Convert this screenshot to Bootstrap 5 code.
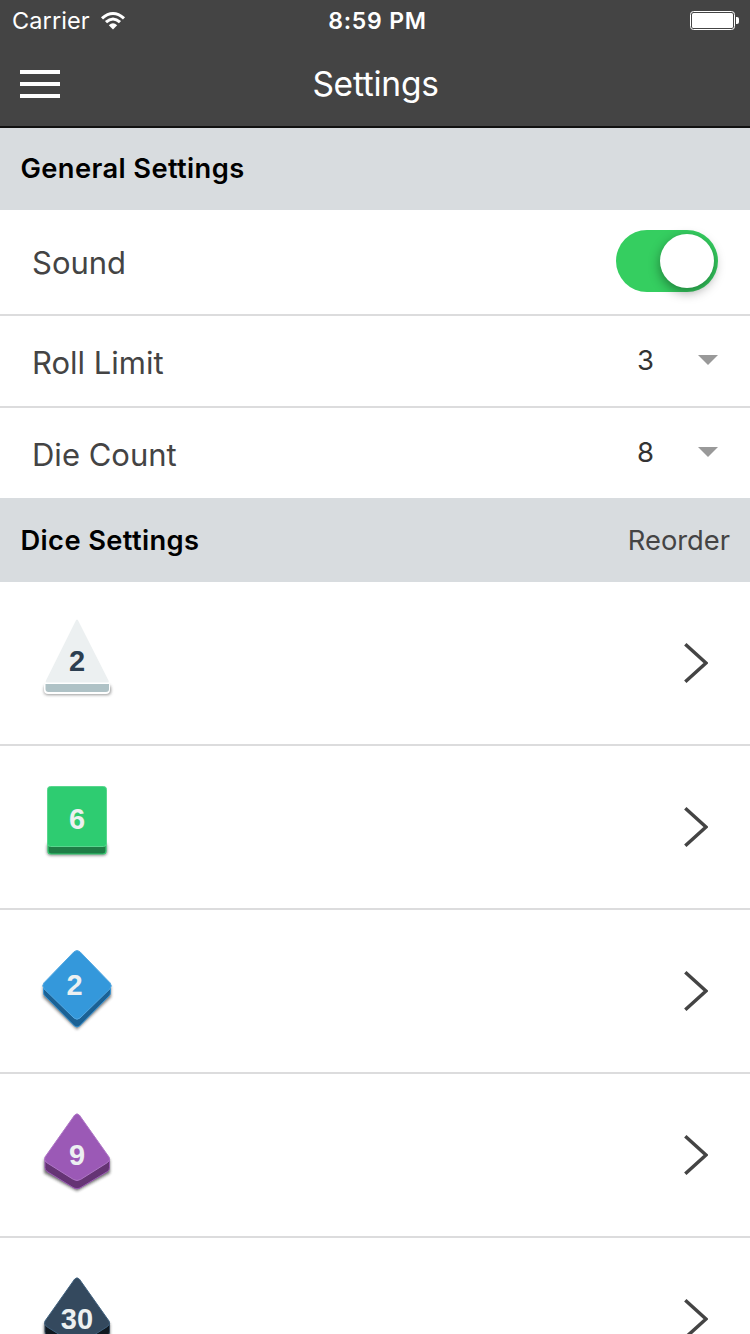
<!DOCTYPE html>
<html lang="en">
<head>
<meta charset="utf-8">
<meta name="viewport" content="width=device-width, initial-scale=1">
<title>Settings</title>
<link href="https://cdn.jsdelivr.net/npm/bootstrap@5.3.0/dist/css/bootstrap.min.css" rel="stylesheet">
<style>
body{font-family:Inter,"Liberation Sans",sans-serif;color:#444;background:#fff}
svg{display:block;flex:none}
.screen{height:1334px;overflow:hidden}
.app-head{background:#444;color:#fff;height:128px;border-bottom:2px solid #111}
.status-row{height:41px;font-size:23.5px;line-height:40px;padding:1px 11px 0 12px}
.status-row>div,.title-row>div{flex:1 1 0}
.carrier{letter-spacing:.1px}
.clock{font-weight:600;letter-spacing:.8px;font-size:23px;padding-left:4px}
.title-row{height:86px;padding:0 20px}
.title-row h1{font-size:33.5px;font-weight:400;line-height:86px;letter-spacing:-.25px;padding-left:1px}
.section-bar{background:#d8dcdf;height:82px;padding:0 20px}
.section-bar.tall{height:84px}
.section-bar h2{font-size:27.3px;font-weight:600;color:#000;line-height:80px;letter-spacing:.38px;padding-left:.5px}
.section-bar.tall h2{padding-top:1px}
.reorder{font-size:27.3px;color:#444;line-height:82px;padding:2px 0 0;border:0}
.settings-list .list-group-item,.settings-list .list-group-item:last-child{border:0;border-bottom:2px solid #dcdcdd;padding:0 32px;height:92px;color:#444;font-size:31px}
.settings-list .sound-row{height:106px}
.settings-list .list-group-item.last-row{height:90px;border-bottom:0}
.row-label{line-height:40px;padding-top:4px}
.sound-row .row-label{padding-top:2px}
.toggle{width:102px;height:62px;border-radius:31px;background:#35ce60;padding:4px 4px 4px 44px;margin-top:-2px}
.knob{width:54px;height:54px;border-radius:50%;background:#fff;box-shadow:0 4px 12px rgba(0,0,0,.4)}
.choice{font-size:27.5px;color:#333}
.caret{margin-left:44px;margin-top:-3px}
.settings-list .list-group-item.die-row{height:164px;padding:0 42px 0 32px}
.die-row text{font:bold 29px "Liberation Sans",Arial,sans-serif;text-anchor:middle;fill:#ecf0f1}
</style>
</head>
<body>
<div class="screen">
<header class="app-head">
  <div class="status-row d-flex align-items-center">
    <div class="d-flex align-items-center carrier">Carrier
      <svg style="margin-left:10px" width="26" height="20" viewBox="0 0 26 20" fill="none" stroke="#fff" stroke-width="3.1"><path d="M2 7.400Q13 -2.400 24 7.400"/><path d="M6 11.200Q13 4.800 20 11.200"/><path d="M8.800 14.300Q13 10.400 17.200 14.300L13 18.500Z" fill="#fff" stroke="none"/></svg>
    </div>
    <span class="clock">8:59 PM</span>
    <div class="d-flex justify-content-end"><svg width="49" height="20" viewBox="0 0 49 20"><rect x=".5" y=".5" width="44" height="18" rx="3" fill="none" stroke="#fff"/><rect x="2" y="2" width="41" height="15" rx="1.500" fill="#fff"/><path d="M46 6h1a2 2 0 0 1 2 2v3a2 2 0 0 1-2 2h-1z" fill="#fff"/></svg></div>
  </div>
  <div class="title-row d-flex align-items-center">
    <div><svg width="40" height="30" role="button" aria-label="Menu"><path d="M0 3h40M0 15h40M0 27h40" stroke="#fff" stroke-width="4"/></svg></div>
    <h1 class="m-0">Settings</h1>
    <div></div>
  </div>
</header>
<main>
  <div class="section-bar d-flex align-items-center"><h2 class="m-0">General Settings</h2></div>
  <div class="list-group list-group-flush settings-list">
    <div class="list-group-item sound-row d-flex align-items-center justify-content-between">
      <span class="row-label">Sound</span><div class="toggle" role="switch" aria-checked="true"><div class="knob"></div></div>
    </div>
    <div class="list-group-item d-flex align-items-center">
      <span class="row-label me-auto">Roll Limit</span><span class="choice">3</span>
      <svg class="caret" width="20" height="10" viewBox="0 0 20 10"><path d="M0 0h20L10 10z" fill="#999"/></svg>
    </div>
    <div class="list-group-item last-row d-flex align-items-center">
      <span class="row-label me-auto">Die Count</span><span class="choice">8</span>
      <svg class="caret" width="20" height="10" viewBox="0 0 20 10"><path d="M0 0h20L10 10z" fill="#999"/></svg>
    </div>
  </div>
  <div class="section-bar tall d-flex align-items-center justify-content-between"><h2 class="m-0">Dice Settings</h2><button class="btn reorder">Reorder</button></div>
  <div class="list-group list-group-flush settings-list">
    <div class="list-group-item die-row d-flex align-items-center justify-content-between">
      <svg width="90" height="100" viewBox="0 0 90 100">
        <defs><filter id="soft" x="-30%" y="-30%" width="160%" height="160%"><feGaussianBlur stdDeviation="1.8"/></filter></defs>
        <rect x="12" y="72" width="67" height="10" rx="4" fill="#555" opacity=".6" filter="url(#soft)"/>
        <rect x="12" y="69" width="66" height="12" rx="4" fill="#fff"/>
        <path d="M13.500 71h63.500v5q0 3-3 3h-57.500q-3 0-3-3z" fill="#afc2c6"/>
        <path d="M44 7.200q1-1.500 2 0L76.500 67.500q1 2-1.500 2H15.500q-2.500 0-1.500-2z" fill="#ecf0f1"/>
        <text x="45" y="58" style="fill:#2c3e50">2</text>
      </svg>
      <svg width="24" height="40" viewBox="0 0 24 40"><path d="M1.300 1.300L22 20L1.300 38.700" fill="none" stroke="#444" stroke-width="3.500"/></svg>
    </div>
    <div class="list-group-item die-row d-flex align-items-center justify-content-between">
      <svg width="90" height="100" viewBox="0 0 90 100">
        <rect x="15" y="66" width="60" height="12.500" rx="4" fill="#333" opacity=".6" filter="url(#soft)"/>
        <rect x="16" y="61" width="58" height="16" rx="3" fill="#1f7d46" stroke="#35cc72" stroke-width="1.200"/>
        <rect x="15.500" y="9.500" width="59" height="60" rx="3" fill="#2ecc71" stroke="#58d68d"/>
        <text x="45" y="51.500">6</text>
      </svg>
      <svg width="24" height="40" viewBox="0 0 24 40"><path d="M1.300 1.300L22 20L1.300 38.700" fill="none" stroke="#444" stroke-width="3.500"/></svg>
    </div>
    <div class="list-group-item die-row d-flex align-items-center justify-content-between">
      <svg width="90" height="100" viewBox="0 0 90 100">
        <path d="M11 46L45 20L79 46V56L45 88.500L11 56z" fill="#222" opacity=".6" filter="url(#soft)"/>
        <path d="M11.500 45.500H78.500v6q0 2-1.500 3.500L47.500 85q-2.500 2-5 0L13 55q-1.500-1.500-1.500-3.500z" fill="#1b6194" stroke="#3493d4"/>
        <path d="M42 10.800q3-2.500 6 0L78 41.800q2.500 3 0 6L48 77q-3 2.500-6 0L12 47.800q-2.500-3 0-6z" fill="#3498db" stroke="#55a9e2"/>
        <text x="42.500" y="54">2</text>
      </svg>
      <svg width="24" height="40" viewBox="0 0 24 40"><path d="M1.300 1.300L22 20L1.300 38.700" fill="none" stroke="#444" stroke-width="3.500"/></svg>
    </div>
    <div class="list-group-item die-row d-flex align-items-center justify-content-between">
      <svg width="90" height="100" viewBox="0 0 90 100">
        <path d="M12 55L45 40L78 55V68L45 86L12 68z" fill="#222" opacity=".65" filter="url(#soft)"/>
        <path d="M13 54h64.500v8.500q0 2.500-2 4L48 83q-3 1.500-6 0L15 66.500q-2-1.500-2-4z" fill="#653474" stroke="#9b59b6"/>
        <path d="M42.500 10.300q2.500-3 5 0L77 52q2 3-1.500 5.500L48.500 74.500q-3.500 2-7 0L14.500 57.500q-3-2.500-1.500-5.500z" fill="#9b59b6" stroke="#af77c6"/>
        <text x="45" y="59.700">9</text>
      </svg>
      <svg width="24" height="40" viewBox="0 0 24 40"><path d="M1.300 1.300L22 20L1.300 38.700" fill="none" stroke="#444" stroke-width="3.500"/></svg>
    </div>
    <div class="list-group-item die-row d-flex align-items-center justify-content-between">
      <svg width="90" height="100" viewBox="0 0 90 100">
        <path d="M12 55L45 40L78 55V68L45 86L12 68z" fill="#222" opacity=".65" filter="url(#soft)"/>
        <path d="M13 54h64.500v8.500q0 2.500-2 4L48 83q-3 1.500-6 0L15 66.500q-2-1.500-2-4z" fill="#101820" stroke="#34495e"/>
        <path d="M42.500 10.300q2.500-3 5 0L77 52q2 3-1.500 5.500L48.500 74.500q-3.500 2-7 0L14.500 57.500q-3-2.500-1.500-5.500z" fill="#34495e" stroke="#41627f"/>
        <text x="45" y="59.700">30</text>
      </svg>
      <svg width="24" height="40" viewBox="0 0 24 40"><path d="M1.300 1.300L22 20L1.300 38.700" fill="none" stroke="#444" stroke-width="3.500"/></svg>
    </div>
  </div>
</main>
</div>
<script src="https://cdn.jsdelivr.net/npm/bootstrap@5.3.0/dist/js/bootstrap.bundle.min.js"></script>
</body>
</html>
